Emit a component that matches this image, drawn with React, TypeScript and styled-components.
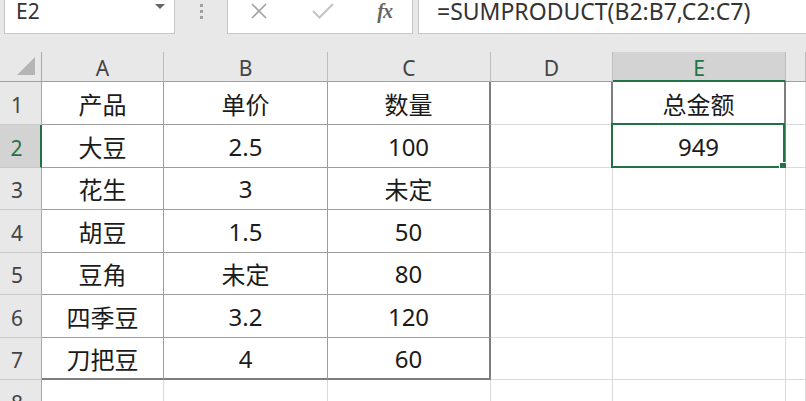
import React from 'react'
import styled, { createGlobalStyle, css } from 'styled-components'

type Line = 'grid' | 'frame' | 'edge' | 'none'

interface RowData {
    n: number;
    height: number;
    cells: string[];
}

const rows: RowData[] = [
    { n: 1, height: 43, cells: ['产品', '单价', '数量', '', '总金额', ''] },
    { n: 2, height: 43, cells: ['大豆', '2.5', '100', '', '949', ''] },
    { n: 3, height: 42, cells: ['花生', '3', '未定', '', '', ''] },
    { n: 4, height: 43, cells: ['胡豆', '1.5', '50', '', '', ''] },
    { n: 5, height: 42, cells: ['豆角', '未定', '80', '', '', ''] },
    { n: 6, height: 43, cells: ['四季豆', '3.2', '120', '', '', ''] },
    { n: 7, height: 42, cells: ['刀把豆', '4', '60', '', '', ''] },
    { n: 8, height: 43, cells: ['', '', '', '', '', ''] },
]

// F lies past the right edge of the window, so its letter is not shown
const columns = ['A', 'B', 'C', 'D', 'E', '']
const widths = [42, 122, 164, 163, 122, 173, 20]

const lines: Record<Line, string> = {
    grid: '1px solid #dadada',
    frame: '1px solid #9c9c9c',
    edge: '2px solid #7e7e7e',
    none: '0',
}

// border of a data cell, from where it sits in the sheet
function rightLine(row: number, col: number): Line {
    if (row <= 7 && col <= 1) return 'frame'
    if (row <= 7 && col === 2) return 'edge'
    if (row <= 2 && col === 3) return 'edge'
    if (row <= 2 && col === 4) return 'edge'
    return 'grid'
}

function bottomLine(row: number, col: number): Line {
    if (col <= 2 && row < 7) return 'frame'
    if (col <= 2 && row === 7) return 'edge'
    if (col === 4 && row <= 2) return 'frame'
    return 'grid'
}

export default function App() {
    return (
        <Page>
            <GlobalStyle />
            <FormulaBar>
                <NameBox>
                    <span>E2</span>
                    <Caret />
                </NameBox>
                <Grip>
                    <i /><i /><i />
                </Grip>
                <ActionBox>
                    <ActionIcon width="18" height="18" viewBox="0 0 18 18">
                        <path d="M2 2 L16 16 M16 2 L2 16" stroke="#a3a3a3" strokeWidth="1.6" fill="none" />
                    </ActionIcon>
                    <ActionIcon width="24" height="18" viewBox="0 0 24 18">
                        <path d="M2 9 L8.5 15.5 L22 2" stroke="#c4c4c4" strokeWidth="2" fill="none" />
                    </ActionIcon>
                    <Fx>fx</Fx>
                </ActionBox>
                <FormulaInput>
                    <span>=SUMPRODUCT(B2:B7,C2:C7)</span>
                </FormulaInput>
            </FormulaBar>
            <Sheet>
                <Corner>
                    <svg width="20" height="20" viewBox="0 0 20 20">
                        <polygon points="19,1 19,19 1,19" fill="#b5b5b5" />
                    </svg>
                </Corner>
                {columns.map((c, i) => (
                    <ColHeader key={i} $selected={c === 'E'}>{c}</ColHeader>
                ))}
                {rows.map((r) => (
                    <React.Fragment key={r.n}>
                        <RowHeader $selected={r.n === 2} $h={r.height}>{r.n}</RowHeader>
                        {r.cells.map((text, ci) => (
                            <Cell
                                key={ci}
                                $right={rightLine(r.n, ci)}
                                $bottom={bottomLine(r.n, ci)}
                            >
                                {text}
                                {r.n === 2 && ci === 4 && (
                                    <Selection>
                                        <FillHandle />
                                    </Selection>
                                )}
                            </Cell>
                        ))}
                    </React.Fragment>
                ))}
            </Sheet>
        </Page>
    )
}

const GlobalStyle = createGlobalStyle`
    html, body {
        margin: 0;
        padding: 0;
        background: #e8e8e8;
        overflow: hidden;
    }
    body {
        font-family: "Noto Sans", "Noto Sans CJK SC", sans-serif;
        color: #1b1b1b;
    }
`

const Page = styled.div`
    width: 806px;
    height: 401px;
    overflow: hidden;
    background: #e8e8e8;
`

// the bar's top lies above the window in the screenshot
const FormulaBar = styled.div`
    display: flex;
    align-items: stretch;
    height: 45px;
    margin-top: -11px;
    padding: 0 0 0 4px;
    margin-bottom: 18px;
    box-sizing: border-box;
`

const WhiteBox = css`
    background: #fff;
    border: 1px solid #c6c6c6;
    border-top: none;
    box-sizing: border-box;
`

const NameBox = styled.div`
    ${WhiteBox}
    width: 171px;
    display: flex;
    align-items: center;
    justify-content: space-between;
    padding: 0 9px 0 11px;
    font-size: 21px;
    color: #333;
`

const Caret = styled.i`
    width: 0;
    height: 0;
    border-left: 5px solid transparent;
    border-right: 5px solid transparent;
    border-top: 5px solid #666;
    margin-bottom: 9px;
`

const Grip = styled.div`
    width: 52px;
    display: flex;
    flex-direction: column;
    align-items: center;
    justify-content: center;
    gap: 3px;

    i {
        display: block;
        width: 3px;
        height: 3px;
        background: #a0a0a0;
    }
`

const ActionBox = styled.div`
    ${WhiteBox}
    width: 186px;
    display: flex;
    align-items: center;
    padding: 0 20px 0 22px;
    justify-content: space-between;
`

const ActionIcon = styled.svg`
    display: block;
`

const Fx = styled.span`
    font-family: "Liberation Serif", serif;
    font-style: italic;
    font-weight: bold;
    font-size: 20px;
    color: #666;
    letter-spacing: -1px;
`

// the input runs on past the window's right edge, so no right border shows
const FormulaInput = styled.div`
    ${WhiteBox}
    border-right: none;
    flex: 1;
    margin-left: 5px;
    padding: 0 0 1px 18px;
    display: flex;
    align-items: center;
    font-size: 23px;
    color: #333;
`

const Sheet = styled.div`
    display: grid;
    grid-template-columns: ${widths.map((w) => `${w}px`).join(' ')};
    grid-auto-rows: auto;
`

const Corner = styled.div`
    height: 30px;
    box-sizing: border-box;
    border-right: 1px solid #a8a8a8;
    border-bottom: 1px solid #a0a0a0;
    display: flex;
    align-items: flex-end;
    justify-content: flex-end;
    padding: 0 5px 5px 0;
`

const ColHeader = styled.div<{ $selected?: boolean }>`
    height: 30px;
    box-sizing: border-box;
    display: flex;
    align-items: center;
    justify-content: center;
    padding-top: 3px;
    font-size: 21px;
    color: ${(p) => (p.$selected ? '#217346' : '#444')};
    background: ${(p) => (p.$selected ? '#d3d3d3' : '#e8e8e8')};
    border-right: 1px solid #bdbdbd;
    border-bottom: ${(p) => (p.$selected ? '2px solid #217346' : '1px solid #a0a0a0')};
`

const RowHeader = styled.div<{ $selected?: boolean; $h: number }>`
    height: ${(p) => p.$h}px;
    box-sizing: border-box;
    display: flex;
    align-items: center;
    justify-content: center;
    padding: 3px 7px 0 0;
    font-size: 21px;
    color: ${(p) => (p.$selected ? '#217346' : '#444')};
    background: ${(p) => (p.$selected ? '#d3d3d3' : '#e8e8e8')};
    border-right: ${(p) => (p.$selected ? '2px solid #217346' : '1px solid #a8a8a8')};
    border-bottom: 1px solid #c8c8c8;
`

const Cell = styled.div<{ $right: Line; $bottom: Line }>`
    position: relative;
    box-sizing: border-box;
    background: #fff;
    display: flex;
    align-items: center;
    justify-content: center;
    font-size: 24px;
    color: #1b1b1b;
    border-right: ${(p) => lines[p.$right]};
    border-bottom: ${(p) => lines[p.$bottom]};
`

const Selection = styled.div`
    position: absolute;
    top: -2px;
    left: -2px;
    right: -1px;
    bottom: -1px;
    border: 2px solid #217346;
    pointer-events: none;
`

const FillHandle = styled.div`
    position: absolute;
    right: -5px;
    bottom: -5px;
    width: 7px;
    height: 7px;
    background: #217346;
    border: 1px solid #fff;
`
